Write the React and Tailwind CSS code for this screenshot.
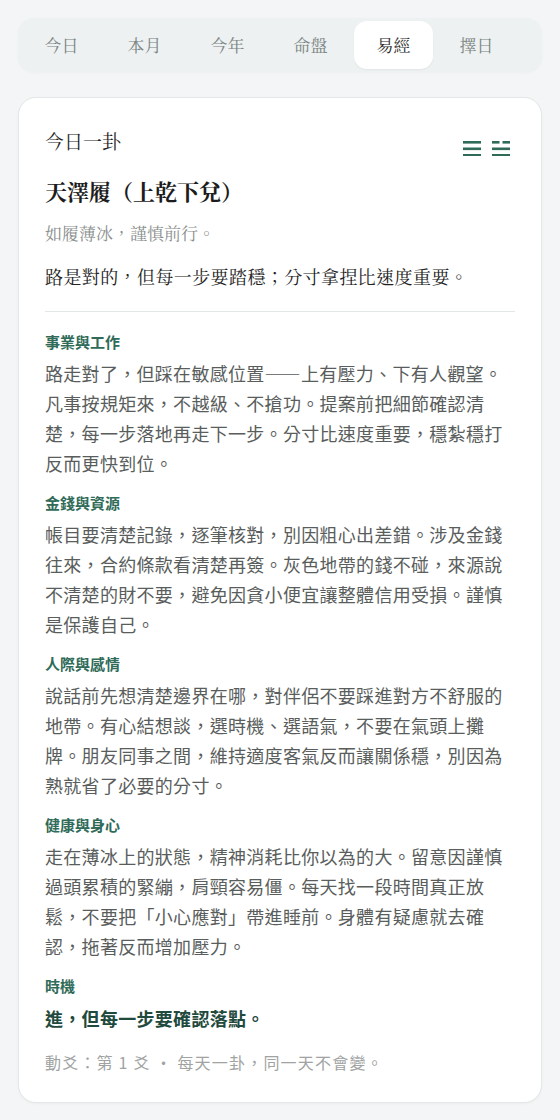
import React from "react";

const tabs = ["今日", "本月", "今年", "命盤", "易經", "擇日"];

const serif =
  "font-['Noto_Serif_CJK_TC','Noto_Serif_TC','AR_PL_UMing_TW','Noto_Sans_CJK_TC',serif]";

const sections = [
  {
    title: "事業與工作",
    body: "路走對了，但踩在敏感位置——上有壓力、下有人觀望。凡事按規矩來，不越級、不搶功。提案前把細節確認清楚，每一步落地再走下一步。分寸比速度重要，穩紮穩打反而更快到位。",
  },
  {
    title: "金錢與資源",
    body: "帳目要清楚記錄，逐筆核對，別因粗心出差錯。涉及金錢往來，合約條款看清楚再簽。灰色地帶的錢不碰，來源說不清楚的財不要，避免因貪小便宜讓整體信用受損。謹慎是保護自己。",
  },
  {
    title: "人際與感情",
    body: "說話前先想清楚邊界在哪，對伴侶不要踩進對方不舒服的地帶。有心結想談，選時機、選語氣，不要在氣頭上攤牌。朋友同事之間，維持適度客氣反而讓關係穩，別因為熟就省了必要的分寸。",
  },
  {
    title: "健康與身心",
    body: "走在薄冰上的狀態，精神消耗比你以為的大。留意因謹慎過頭累積的緊繃，肩頸容易僵。每天找一段時間真正放鬆，不要把「小心應對」帶進睡前。身體有疑慮就去確認，拖著反而增加壓力。",
  },
];

function Trigram({ lines }) {
  return (
    <svg width="18" height="16" viewBox="0 0 18 16" className="block">
      {lines.map((solid, i) => {
        const y = 1 + i * 6.5;
        return solid ? (
          <rect key={i} x="0" y={y} width="18" height="2.6" fill="#2f6b58" />
        ) : (
          <g key={i}>
            <rect x="0" y={y} width="7.5" height="2.6" fill="#2f6b58" />
            <rect x="10.5" y={y} width="7.5" height="2.6" fill="#2f6b58" />
          </g>
        );
      })}
    </svg>
  );
}

export default function App() {
  return (
    <div
      lang="zh-Hant"
      className="min-h-[1120px] bg-[#f3f5f6] px-[18px] pt-[18px] pb-4 font-['Noto_Sans_CJK_TC','Noto_Sans',sans-serif]"
    >
      <div className="flex h-[54px] items-center gap-[4px] rounded-[16px] bg-[#edf1f1] px-[4px] py-[3px] shadow-[0_1px_3px_rgba(0,0,0,0.03)]">
        {tabs.map((t) => (
          <div
            key={t}
            className={
              t === "易經"
                ? "flex h-[48px] w-[79px] items-center justify-center rounded-[13px] bg-white font-['Noto_Serif_CJK_TC','Noto_Serif_TC','AR_PL_UMing_TW','Noto_Sans_CJK_TC',serif] text-[17px] text-[#2b2b2b] shadow-[0_1px_2px_rgba(0,0,0,0.05)]"
                : "flex h-[48px] w-[79px] items-center justify-center rounded-[13px] font-['Noto_Serif_CJK_TC','Noto_Serif_TC','AR_PL_UMing_TW','Noto_Sans_CJK_TC',serif] text-[17px] text-[#7a8482]"
            }
          >
            {t}
          </div>
        ))}
      </div>

      <div className="mt-[25px] rounded-[18px] border border-[#e4e7e7] bg-white pl-[26px] pr-[26px] pt-[29px] pb-[28px] shadow-[0_1px_3px_rgba(0,0,0,0.04)]">
        <div className="flex items-start justify-between">
          <div className="font-['Noto_Serif_CJK_TC','Noto_Serif_TC','AR_PL_UMing_TW','Noto_Sans_CJK_TC',serif] text-[19px] leading-[28px] text-[#1f1f1f]">
            今日一卦
          </div>
          <div className="mt-[13px] mr-[5px] flex gap-[11px]">
            <Trigram lines={[true, true, true]} />
            <Trigram lines={[false, true, true]} />
          </div>
        </div>

        <div className="mt-[19px] font-['Noto_Serif_CJK_TC','Noto_Serif_TC','AR_PL_UMing_TW','Noto_Sans_CJK_TC',serif] text-[22px] font-bold leading-[32px] text-[#1c1c1c]">
          天澤履（上乾下兌）
        </div>
        <div className="mt-[12px] font-['Noto_Serif_CJK_TC','Noto_Serif_TC','AR_PL_UMing_TW','Noto_Sans_CJK_TC',serif] text-[17px] leading-[28px] text-[#8b8f8e]">
          如履薄冰，謹慎前行。
        </div>
        <div className="mt-[15px] font-['Noto_Serif_CJK_TC','Noto_Serif_TC','AR_PL_UMing_TW','Noto_Sans_CJK_TC',serif] text-[18px] font-normal leading-[28px] tracking-[0.4px] text-[#222222]">
          路是對的，但每一步要踏穩；分寸拿捏比速度重要。
        </div>

        <div className="mt-[21px] h-px bg-[#e3e6e6]" />

        <div className="mt-[19px] flex flex-col gap-[14px]">
          {sections.map((s) => (
            <div key={s.title}>
              <div className="text-[15px] font-bold leading-[22px] text-[#2f6b58]">{s.title}</div>
              <p className="mt-[5px] text-[18px] leading-[30px] tracking-[0.3px] text-[#595d5c]">
                {s.body}
              </p>
            </div>
          ))}
          <div>
            <div className="text-[15px] font-bold leading-[22px] text-[#2f6b58]">時機</div>
            <div className="mt-[6px] text-[18px] font-bold leading-[30px] tracking-[0.3px] text-[#1f4a3d]">
              進，但每一步要確認落點。
            </div>
          </div>
        </div>

        <div className="mt-[17px] text-[16px] leading-[24px] tracking-[1.2px] text-[#a0a3a2]">
          動爻：第 1 爻 · 每天一卦，同一天不會變。
        </div>
      </div>
    </div>
  );
}
